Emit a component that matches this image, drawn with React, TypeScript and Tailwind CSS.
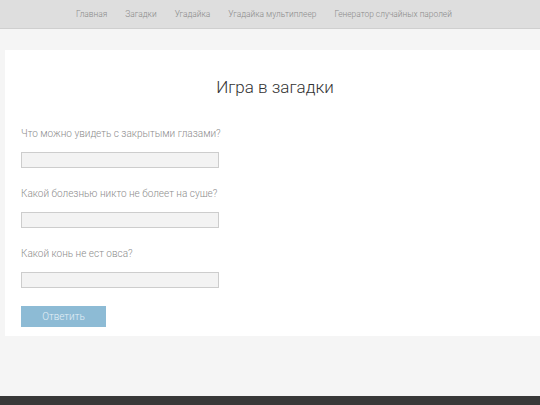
const NAV = ['Главная', 'Загадки', 'Угадайка', 'Угадайка мультиплеер', 'Генератор случайных паролей']

const QUESTIONS = [
  'Что можно увидеть с закрытыми глазами?',
  'Какой болезнью никто не болеет на суше?',
  'Какой конь не ест овса?',
]

export default function App() {
  return (
    <div className="w-[540px] h-[405px] overflow-hidden bg-[#f5f5f5] flex flex-col font-['Roboto',sans-serif] font-light">
      {/* Header */}
      <header className="h-[29px] shrink-0 bg-[#dedede] border-b border-[#cfcfcf] flex items-center pl-[76px] gap-[18px]">
        {NAV.map((item) => (
          <a key={item} className="text-[8.4px] text-[#8a8a8a] whitespace-nowrap">
            {item}
          </a>
        ))}
      </header>

      {/* Card */}
      <main className="flex-1 pt-[21px] pl-[5px]">
        <div className="w-[540px] bg-white px-[16px] pt-[25px] pb-[9px]">
          <h1 className="text-center text-[17px] leading-[24px] text-[#333] font-light">Игра в загадки</h1>

          <form className="mt-[28px] flex flex-col">
            {QUESTIONS.map((q) => (
              <div key={q} className="flex flex-col mb-[19px]">
                <label className="text-[10px] leading-[13px] text-[#8c8c8c] mb-[12px]">{q}</label>
                <input
                  type="text"
                  className="w-[198px] h-[16px] bg-[#f3f3f3] border border-[#cdcdcd] outline-none"
                />
              </div>
            ))}
            <button
              type="button"
              className="w-[85px] h-[21px] bg-[#8dbbd5] text-[#e4f0f7] text-[10px] font-light -mt-px"
            >
              Ответить
            </button>
          </form>
        </div>
      </main>

      {/* Footer */}
      <footer className="h-[9px] shrink-0 bg-[#383838]" />
    </div>
  )
}
